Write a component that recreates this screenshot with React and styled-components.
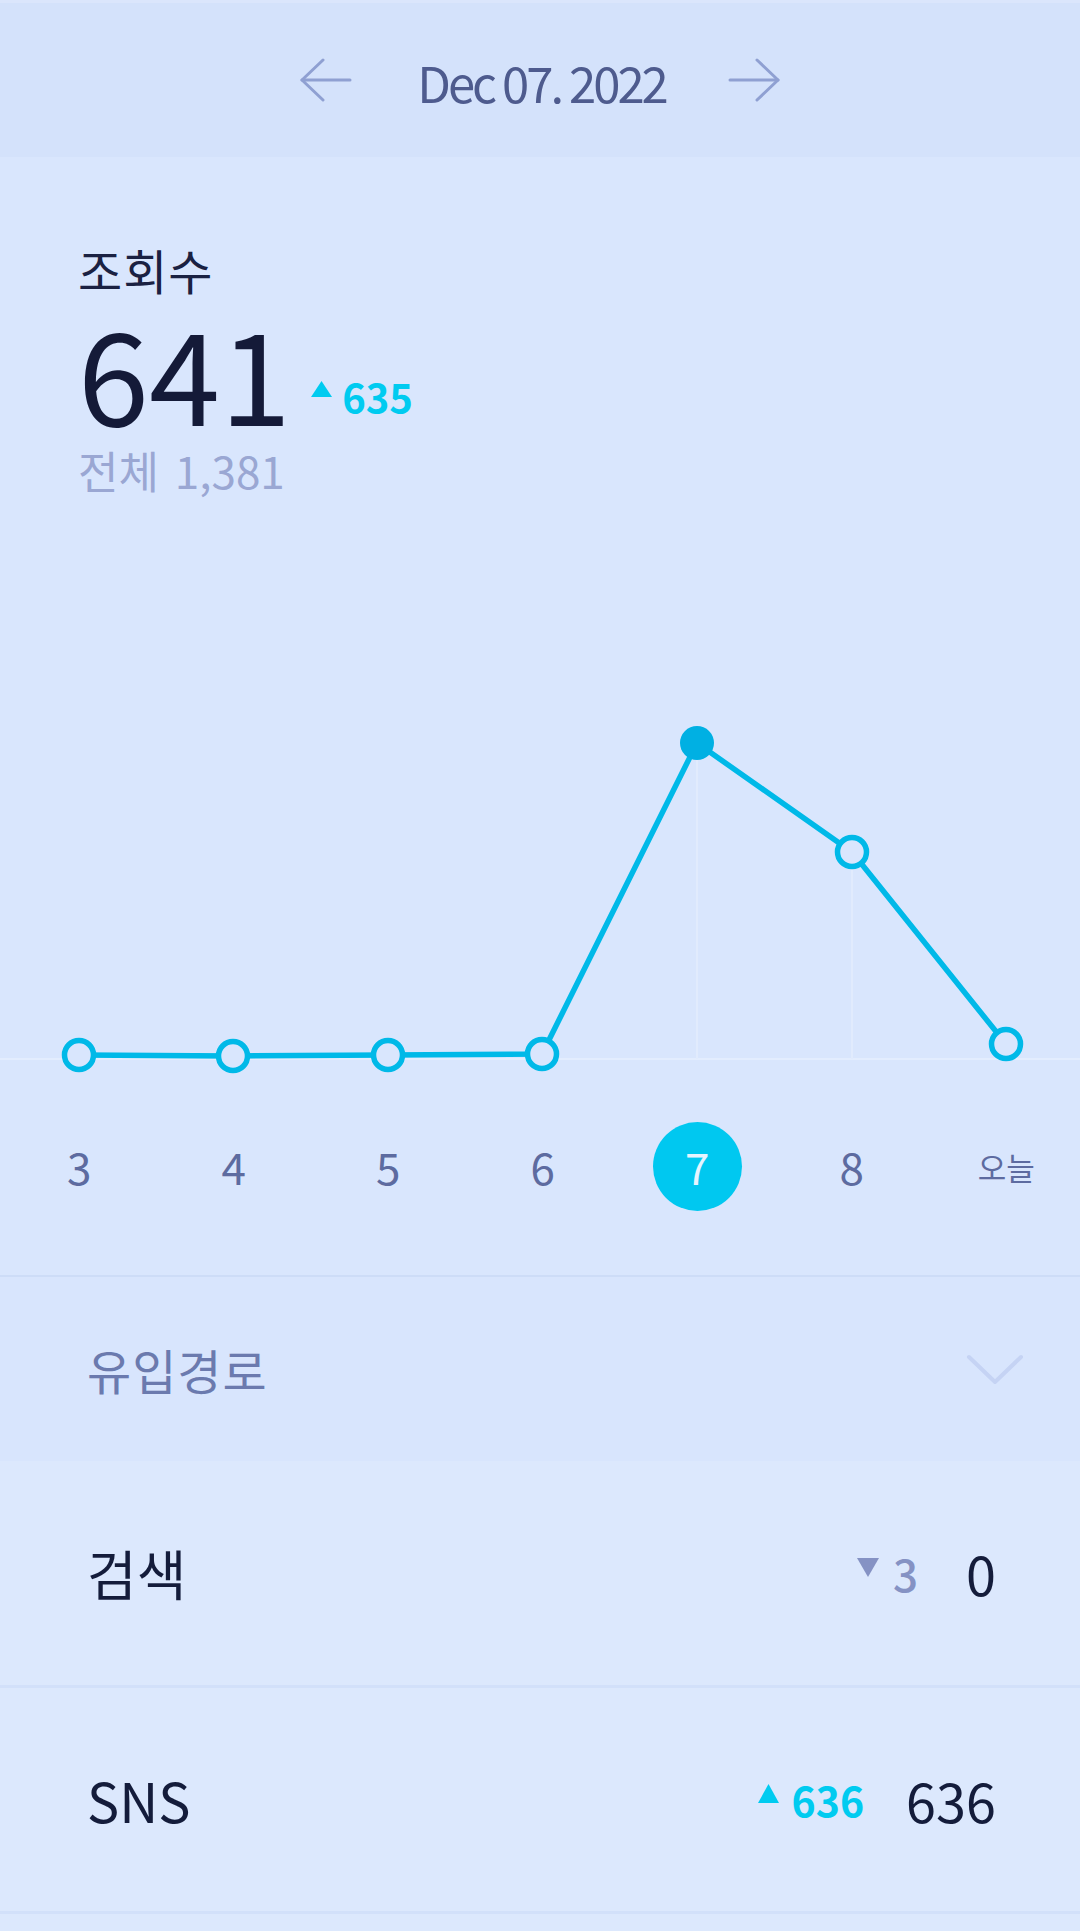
import React from "react";
import styled, { createGlobalStyle } from "styled-components";

const Global = createGlobalStyle`
  html, body { margin: 0; padding: 0; }
  body {
    background: #dce8fd;
    font-family: "Noto Sans CJK KR", "Noto Sans", sans-serif;
    -webkit-font-smoothing: antialiased;
  }
  * { box-sizing: border-box; }
`;

const Page = styled.div`
  width: 1080px;
  min-height: 1931px;
  display: flex;
  flex-direction: column;
  background: #dce8fd;
`;

const Header = styled.header`
  height: 157px;
  border-top: 3px solid #dbe6fc;
  background: #d4e2fb;
  display: flex;
  align-items: center;
  justify-content: center;
`;

const NavButton = styled.button`
  border: 0;
  padding: 0;
  background: none;
  width: 52px;
  height: 44px;
  display: flex;
  align-items: center;
  justify-content: center;
  color: #8fa0d2;
  margin: ${(p) => (p.$side === "left" ? "0 65px 0 0" : "0 0 0 62px")};
`;

const DateText = styled.div`
  font-size: 49px;
  line-height: 1;
  letter-spacing: -3px;
  color: #4e5b8e;
  padding-top: 2px;
`;

const Main = styled.section`
  background: #d9e6fd;
  display: flex;
  flex-direction: column;
`;

const Stats = styled.div`
  padding: 88px 0 0 78px;
  display: flex;
  flex-direction: column;
`;

const StatTitle = styled.div`
  font-size: 48px;
  line-height: 1;
  letter-spacing: 1px;
  color: #1a2142;
`;

const BigRow = styled.div`
  margin-top: 14px;
  display: flex;
  align-items: flex-end;
`;

const BigNumber = styled.div`
  font-size: 128px;
  line-height: 1;
  color: #141a38;
`;

const Delta = styled.div`
  display: flex;
  align-items: center;
  gap: ${(p) => p.$gap || 10}px;
  font-size: ${(p) => p.$size}px;
  line-height: 1;
  font-weight: ${(p) => (p.$up ? 700 : 500)};
  color: ${(p) => (p.$up ? "#00cbf0" : "#8592c4")};
  margin: ${(p) => p.$margin || "0"};
`;

const Tri = styled.svg`
  display: block;
  flex: none;
  margin-bottom: ${(p) => p.$lift || 0}px;
`;

const Total = styled.div`
  margin-top: 13px;
  font-size: 44px;
  line-height: 1;
  word-spacing: 6px;
  color: #9aa7d3;
`;

const Chart = styled.svg`
  display: block;
  margin-top: 188px;
  width: 1080px;
  height: 420px;
`;

const Axis = styled.div`
  margin-top: 20px;
  padding-left: 2px;
  display: grid;
  grid-template-columns: repeat(7, 154.5px);
  height: 92px;
  margin-bottom: 63px;
`;

const Tick = styled.div`
  display: flex;
  align-items: center;
  justify-content: center;
`;

const TickLabel = styled.span`
  font-size: ${(p) => (p.$small ? 31 : 44)}px;
  line-height: 1;
  color: ${(p) => (p.$active ? "#e6f4ff" : "#5d6ba0")};
  width: ${(p) => (p.$active ? "89px" : "auto")};
  height: ${(p) => (p.$active ? "89px" : "auto")};
  border-radius: 50%;
  background: ${(p) => (p.$active ? "#00c8f0" : "transparent")};
  display: flex;
  align-items: center;
  justify-content: center;
`;

const Divider = styled.div`
  height: 2px;
  background: #cddcf7;
`;

const SectionHead = styled.div`
  height: 184px;
  background: #d8e5fd;
  padding: 0 55px 0 87px;
  display: flex;
  align-items: center;
  justify-content: space-between;
`;

const SectionTitle = styled.div`
  font-size: 48px;
  line-height: 1;
  letter-spacing: 1px;
  color: #6b7aae;
`;

const List = styled.div`
  flex: 1;
  background: #dce8fd;
`;

const Row = styled.div`
  height: ${(p) => p.$h}px;
  border-bottom: 3px solid #d2e0fa;
  padding: 0 84px 0 87px;
  display: flex;
  align-items: center;
  justify-content: space-between;
  box-sizing: content-box;
`;

const RowLabel = styled.div`
  font-size: 54px;
  line-height: 1;
  color: #141c3b;
`;

const RowRight = styled.div`
  display: flex;
  align-items: center;
  gap: 42px;
`;

const RowValue = styled.div`
  font-size: 54px;
  line-height: 1;
  color: #141c3b;
`;

function Arrow({ dir }) {
  const left = dir === "left";
  return (
    <svg width="52" height="44" viewBox="0 0 52 44" fill="none">
      <g stroke="currentColor" strokeWidth="3" strokeLinecap="round" strokeLinejoin="round"
        transform={left ? "" : "translate(52 0) scale(-1 1)"}>
        <path d="M2 22 H50" />
        <path d="M23 2 L2 22 L23 42" />
      </g>
    </svg>
  );
}

function Triangle({ up, w = 21, h = 17, color, lift }) {
  return (
    <Tri width={w} height={h} viewBox={`0 0 ${w} ${h}`} $lift={lift}>
      {up ? (
        <polygon points={`${w / 2},0 ${w},${h} 0,${h}`} fill={color} />
      ) : (
        <polygon points={`0,0 ${w},0 ${w / 2},${h}`} fill={color} />
      )}
    </Tri>
  );
}

const points = [
  [79, 375],
  [233, 376],
  [388, 375],
  [542, 374],
  [697, 63],
  [852, 172],
  [1006, 364],
];
const labels = ["3", "4", "5", "6", "7", "8", "오늘"];
const activeIndex = 4;

export default function App() {
  return (
    <Page>
      <Global />
      <Header>
        <NavButton $side="left" aria-label="previous">
          <Arrow dir="left" />
        </NavButton>
        <DateText>Dec 07. 2022</DateText>
        <NavButton $side="right" aria-label="next">
          <Arrow dir="right" />
        </NavButton>
      </Header>

      <Main>
        <Stats>
          <StatTitle>조회수</StatTitle>
          <BigRow>
            <BigNumber>641</BigNumber>
            <Delta $up $size={40} $gap={10} $margin="0 0 19px 20px">
              <Triangle up w={21} h={16} color="#00cbf0" lift={14} />
              <span>635</span>
            </Delta>
          </BigRow>
          <Total>전체 1,381</Total>
        </Stats>

        <Chart viewBox="0 0 1080 420">
          <line x1="0" y1="379" x2="1080" y2="379" stroke="#e3edfe" strokeWidth="2" />
          <line x1="697" y1="63" x2="697" y2="379" stroke="#e1ebfd" strokeWidth="2" />
          <line x1="852" y1="172" x2="852" y2="379" stroke="#e1ebfd" strokeWidth="2" />
          <polyline
            points={points.map((p) => p.join(",")).join(" ")}
            fill="none"
            stroke="#00b9e8"
            strokeWidth="5.5"
            strokeLinejoin="round"
          />
          {points.map(([x, y], i) =>
            i === activeIndex ? (
              <circle key={i} cx={x} cy={y} r="17" fill="#00b0e3" />
            ) : (
              <circle key={i} cx={x} cy={y} r="14.5" fill="#d9e6fd" stroke="#00b9e8" strokeWidth="5.5" />
            )
          )}
        </Chart>

        <Axis>
          {labels.map((l, i) => (
            <Tick key={l}>
              <TickLabel $active={i === activeIndex} $small={l.length > 1}>
                {l}
              </TickLabel>
            </Tick>
          ))}
        </Axis>
      </Main>

      <Divider />

      <SectionHead>
        <SectionTitle>유입경로</SectionTitle>
        <svg width="60" height="34" viewBox="0 0 60 34" fill="none">
          <path d="M4 5 L30 30 L56 5" stroke="#c5d3f4" strokeWidth="4" strokeLinecap="round" strokeLinejoin="round" />
        </svg>
      </SectionHead>

      <List>
        <Row $h={224}>
          <RowLabel>검색</RowLabel>
          <RowRight>
            <Delta $size={44} $gap={14} $margin="0 6px 0 0">
              <Triangle w={22} h={19} color="#8592c4" lift={12} />
              <span>3</span>
            </Delta>
            <RowValue>0</RowValue>
          </RowRight>
        </Row>
        <Row $h={223}>
          <RowLabel>SNS</RowLabel>
          <RowRight>
            <Delta $up $size={41} $gap={13}>
              <Triangle up w={21} h={19} color="#00cbf0" lift={12} />
              <span>636</span>
            </Delta>
            <RowValue>636</RowValue>
          </RowRight>
        </Row>
      </List>
    </Page>
  );
}
